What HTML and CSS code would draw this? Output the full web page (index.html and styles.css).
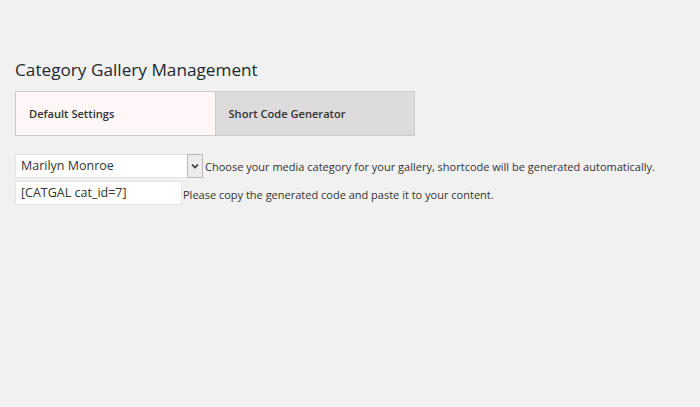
FILE: index.html
```html
<!DOCTYPE html>
<html>
<head>
<meta charset="utf-8">
<link rel="stylesheet" href="styles.css">
</head>
<body>
<div class="wrap">
  <h2 class="title">Category Gallery Management</h2>
  <div class="tabs">
    <div class="tab active">Default Settings</div>
    <div class="tab">Short Code Generator</div>
  </div>
  <div class="row">
    <div class="select">
      <span class="select-value">Marilyn Monroe</span>
      <span class="select-btn"><svg width="8" height="6" viewBox="0 0 8 6"><path d="M1 1.5 L4 4.5 L7 1.5" fill="none" stroke="#333" stroke-width="1.6"/></svg></span>
    </div>
    <span class="desc">Choose your media category for your gallery, shortcode will be generated automatically.</span>
  </div>
  <div class="row row2">
    <div class="input">[CATGAL cat_id=7]</div>
    <span class="desc desc2">Please copy the generated code and paste it to your content.</span>
  </div>
</div>
</body>
</html>
```
FILE: styles.css
```css
html, body {
  margin: 0;
  padding: 0;
  background: #f1f1f1;
  height: 100%;
}
body {
  font-family: "Open Sans", "Noto Sans", sans-serif;
  color: #444;
}
.wrap {
  padding: 57px 0 0 15px;
}
.title {
  margin: 0;
  font-size: 17.2px;
  font-weight: 400;
  color: #23282d;
  line-height: 26px;
}
.tabs {
  display: flex;
  width: 398px;
  margin-top: 8px;
  border: 1px solid #cccccc;
  height: 43px;
}
.tab {
  flex: 1;
  display: flex;
  align-items: center;
  padding-left: 13px;
  font-size: 11.1px;
  font-weight: 600;
  color: #333;
  background: #dddbdb;
}
.tab.active {
  background: #fff7f7;
  border-right: 1px solid #cccccc;
}
.row {
  display: flex;
  align-items: center;
  margin-top: 18px;
}
.row2 {
  margin-top: 3px;
}
.select {
  display: flex;
  height: 24px;
}
.select-value {
  width: 166px;
  background: #fff;
  border: 1px solid #e4e4e4;
  border-right: none;
  padding-left: 5px;
  font-size: 12.5px;
  color: #333;
  line-height: 22px;
}
.select-btn {
  width: 14px;
  background: #ececec;
  border: 1px solid #b9b9b9;
  display: flex;
  align-items: center;
  justify-content: center;
}
.desc {
  font-size: 11px;
  color: #333;
  margin-left: 2px;
}
.input {
  width: 160px;
  height: 22px;
  background: #fff;
  border: 1px solid #e4e4e4;
  padding-left: 5px;
  font-size: 12.5px;
  color: #333;
  line-height: 22px;
}
.desc2 {
  margin-left: 1px;
  margin-top: 3px;
}
```
